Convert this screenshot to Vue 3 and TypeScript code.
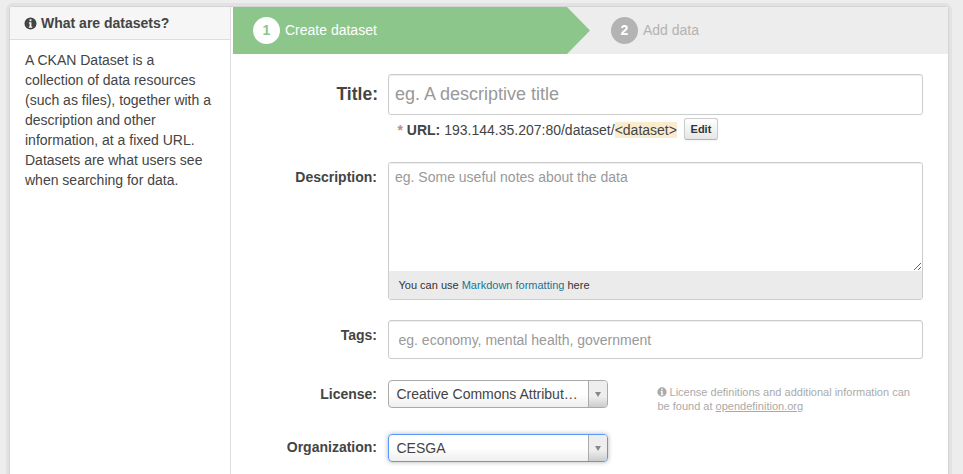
<script setup lang="ts">
const sideText: string = 'A CKAN Dataset is a collection of data resources (such as files), together with a description and other information, at a fixed URL. Datasets are what users see when searching for data.'
</script>

<template>
  <div class="page">
    <div class="wrapper">
      <aside class="side">
        <h2 class="side-head">
          <svg class="info" viewBox="0 0 14 14" width="13" height="13"><path fill-rule="evenodd" d="M7 .5a6.5 6.5 0 1 0 0 13A6.5 6.5 0 0 0 7 .5zM6 2.5h2v2H6zM5.2 5.6H8v4.6h.9v1.3H5.2v-1.3H6V6.9h-.8z"/></svg>
          <span>What are datasets?</span>
        </h2>
        <p class="side-text">{{ sideText }}</p>
      </aside>
      <main class="main">
        <div class="stages">
          <div class="stage active"><span class="num">1</span><span>Create dataset</span></div>
          <div class="stage next"><span class="num">2</span><span>Add data</span></div>
        </div>
        <form class="form">
          <div class="row title-row">
            <label class="lbl big">Title:</label>
            <div class="ctl">
              <input class="input big-input" placeholder="eg. A descriptive title" />
              <div class="url">
                <span class="url-text"><span class="req">*</span> <b>URL:</b> 193.144.35.207:80/dataset/<mark>&lt;dataset&gt;</mark></span>
                <button type="button" class="edit">Edit</button>
              </div>
            </div>
          </div>
          <div class="row desc-row">
            <label class="lbl">Description:</label>
            <div class="ctl md">
              <textarea class="area" placeholder="eg. Some useful notes about the data"></textarea>
              <div class="md-foot"><span>You can use <a>Markdown formatting</a> here</span></div>
            </div>
          </div>
          <div class="row tags-row">
            <label class="lbl">Tags:</label>
            <div class="ctl"><input class="input tags-input" placeholder="eg. economy, mental health, government" /></div>
          </div>
          <div class="row license-row">
            <label class="lbl">License:</label>
            <div class="select">
              <span class="sel-text">Creative Commons Attribut…</span>
              <span class="sel-arrow"><i></i></span>
            </div>
            <p class="help">
              <svg class="info" viewBox="0 0 14 14" width="10" height="10"><path fill-rule="evenodd" d="M7 .5a6.5 6.5 0 1 0 0 13A6.5 6.5 0 0 0 7 .5zM6 2.5h2v2H6zM5.2 5.6H8v4.6h.9v1.3H5.2v-1.3H6V6.9h-.8z"/></svg>
              License definitions and additional information can be found at <a>opendefinition.org</a>
            </p>
          </div>
          <div class="row org-row">
            <label class="lbl">Organization:</label>
            <div class="select focus">
              <span class="sel-text">CESGA</span>
              <span class="sel-arrow"><i></i></span>
            </div>
          </div>
        </form>
      </main>
    </div>
  </div>
</template>

<style>
html, body { margin: 0; padding: 0; overflow: hidden; background: #ededed; }
</style>

<style scoped>
* { box-sizing: border-box; }
.page {
  height: 474px;
  padding: 7px 15px 0 10px;
  font-family: "Liberation Sans", Arial, sans-serif;
  font-size: 14px;
  color: #444;
  background: #ededed;
  overflow: hidden;
}
.wrapper {
  display: flex;
  height: 500px;
  background: #fff;
  border-radius: 3px 3px 0 0;
  box-shadow: 0 0 0 1px #d4d4d4, 0 0 0 4px #e2e2e2;
}
.side { width: 221px; flex: none; border-right: 1px solid #ddd; }
.side-head {
  margin: 0;
  height: 33px;
  padding: 0 14px 0 14px;
  display: flex;
  align-items: center;
  gap: 4px;
  background: #f6f6f6;
  border-bottom: 1px solid #ddd;
  font-size: 14px;
  line-height: 20px;
  font-weight: bold;
  color: #444;
}
.info { flex: none; fill: currentColor; }
.side-text { margin: 0; padding: 10px 15px; line-height: 20px; color: #444; }
.main { flex: 1; min-width: 0; padding-left: 2px; }
.stages {
  display: flex;
  height: 47px;
  background: #ededed;
  color: #b3b3b3;
}
.stage { display: flex; align-items: center; gap: 5px; padding-bottom: 1px; }
.stage.active {
  width: 357px;
  padding-left: 20px;
  background: #8cc68a;
  color: #fff;
  clip-path: polygon(0 0, 334px 0, 357px 23.5px, 334px 47px, 0 47px);
}
.stage.next { padding-left: 21px; }
.num {
  width: 27px;
  height: 27px;
  border-radius: 50%;
  display: flex;
  align-items: center;
  justify-content: center;
  font-weight: bold;
  font-size: 14px;
}
.active .num { background: #fff; color: #8cc68a; }
.next .num { background: #b3b3b3; color: #fff; }
.form { padding: 20px 25px 0 0; }
.row { display: flex; }
.lbl {
  width: 144px;
  flex: none;
  margin-right: 11px;
  text-align: right;
  font-weight: bold;
  line-height: 20px;
  color: #444;
}
.big { font-size: 17.5px; padding-top: 10px; width: 145px; margin-right: 10px; }
.ctl { flex: 1; min-width: 0; }
.input, .area {
  display: block;
  width: 100%;
  margin: 0;
  font-family: inherit;
  background: #fff;
  color: #444;
  border: 1px solid #ccc;
  border-radius: 3px;
  outline: none;
  box-shadow: inset 0 1px 1px rgba(0, 0, 0, .075);
}
.input::placeholder, .area::placeholder { color: #999; opacity: 1; }
.big-input { height: 41px; padding: 0 6px; font-size: 18px; }
.url { margin-top: 3px; height: 22px; padding-left: 9.5px; display: flex; align-items: center; line-height: 20px; }
.url-text { position: relative; top: 1px; white-space: pre; }
.req { color: #c6898b; font-weight: bold; }
.url b { color: #444; }
mark { background: #faedcf; color: #444; }
.edit {
  margin-left: 7px;
  width: 34px;
  height: 22px;
  padding: 0;
  font: bold 11px "Liberation Sans", Arial, sans-serif;
  color: #333;
  background: linear-gradient(#fff, #e6e6e6);
  border: 1px solid #ccc;
  border-bottom-color: #b3b3b3;
  border-radius: 3px;
  box-shadow: 0 1px 2px rgba(0, 0, 0, .05);
}
.desc-row { margin-top: 22px; }
.desc-row .lbl { padding-top: 5px; }
.md { border: 1px solid #ccc; border-radius: 3px; overflow: hidden; height: 138px; }
.area {
  height: 108px;
  border: 0;
  border-radius: 0;
  padding: 4px 6px;
  font-size: 14px;
  line-height: 20px;
  resize: vertical;
}
.md-foot {
  height: 28px;
  padding-left: 9.5px;
  display: flex;
  align-items: center;
  white-space: pre;
  font-size: 11px;
  color: #333;
  background: #ebebeb;
}
.md-foot a { color: #187794; }
.tags-row { margin-top: 20px; }
.tags-row .lbl { padding-top: 5px; }
.tags-input { height: 39px; padding: 0 9.5px; font-size: 14px; }
.license-row { margin-top: 21px; height: 54px; }
.license-row .lbl { padding-top: 4px; }
.org-row .lbl { padding-top: 3px; }
.select {
  width: 220px;
  height: 28px;
  flex: none;
  display: flex;
  font-size: 14px;
  line-height: 26px;
  color: #444;
  border: 1px solid #aaa;
  border-radius: 4px;
  background: linear-gradient(#fff 50%, #eee);
  overflow: hidden;
}
.select.focus { border-color: #5897fb; box-shadow: 0 0 5px rgba(0, 0, 0, .3); }
.sel-text { flex: 1; padding-left: 7.5px; white-space: nowrap; overflow: hidden; }
.sel-arrow {
  width: 19px;
  flex: none;
  display: flex;
  align-items: center;
  justify-content: center;
  border-left: 1px solid #aaa;
  background: linear-gradient(#eee 60%, #ccc);
}
.sel-arrow i {
  width: 0;
  height: 0;
  border: 3.5px solid transparent;
  border-top: 5px solid #888;
  border-bottom: 0;
}
.help {
  margin: 5px 0 0 49.5px;
  width: 262px;
  font-size: 11px;
  line-height: 14px;
  color: #aaa;
}
.help .info { vertical-align: -1px; margin-left: -1px; }
.help a { color: #aaa; text-decoration: underline; }
.org-row { margin-top: 0; }
</style>
